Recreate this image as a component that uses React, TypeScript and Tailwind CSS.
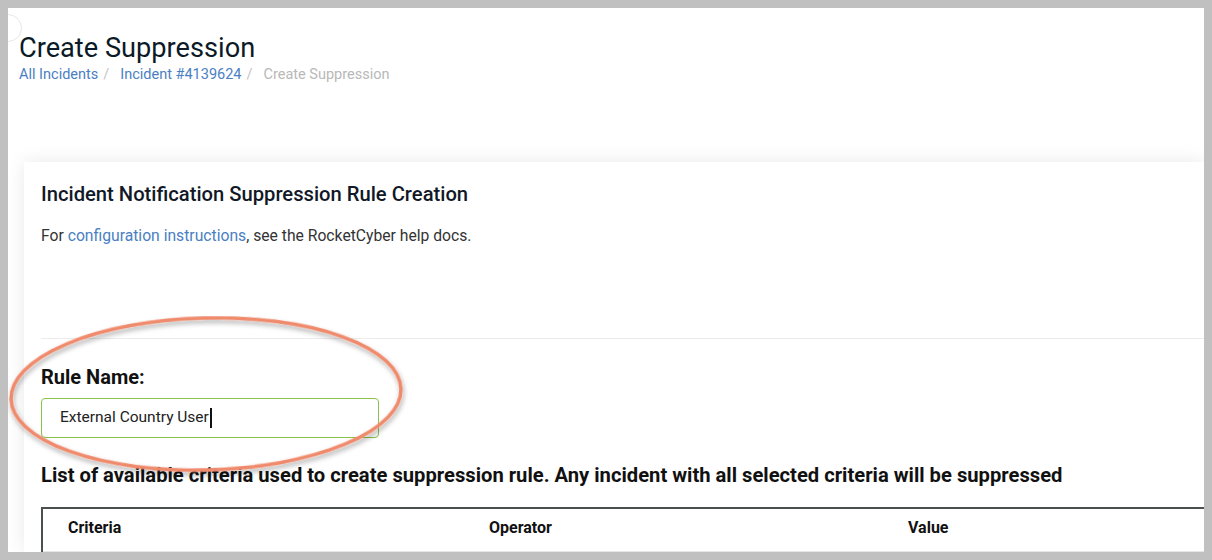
import React from "react";

const Breadcrumb = () => (
  <div className="flex items-center text-[14.5px] leading-[22px]">
    <a className="text-[#4a80c2]">All Incidents</a>
    <span className="pl-[5px] pr-[11px] text-[#c4c4c4]">/</span>
    <a className="text-[#4a80c2]">Incident #4139624</a>
    <span className="pl-[5px] pr-[11px] text-[#c4c4c4]">/</span>
    <span className="text-[#b8b8b8]">Create Suppression</span>
  </div>
);

const HighlightEllipse = () => (
  <svg
    className="pointer-events-none absolute left-0 top-[308px]"
    width="420"
    height="180"
    viewBox="0 0 420 180"
  >
    <defs>
      <filter id="sh" x="-10%" y="-10%" width="120%" height="130%">
        <feDropShadow dx="1" dy="3" stdDeviation="2.5" floodColor="#000" floodOpacity="0.35" />
      </filter>
    </defs>
    <ellipse
      cx="198"
      cy="78"
      rx="195"
      ry="76"
      transform="rotate(-1.5 198 78)"
      fill="none"
      stroke="#f08a6c"
      strokeWidth="3.5"
      filter="url(#sh)"
    />
  </svg>
);

export default function App() {
  return (
    <div className="h-[560px] w-[1212px] bg-[#c0c0c0] p-[8px] font-['Roboto',sans-serif]">
      <div className="relative flex h-[544px] w-[1196px] flex-col overflow-hidden bg-white">
        <div className="absolute left-[-14px] top-[6px] h-[28px] w-[28px] rounded-full border border-[#e6e6e6] bg-white" />
        <div className="pl-[11px] pt-[24px]">
          <h1 className="text-[27.2px] leading-[32px] font-normal text-[#0b1a26]">Create Suppression</h1>
          <Breadcrumb />
        </div>
        <div className="ml-[16px] mt-[76px] flex-1 bg-white pl-[17px] pt-[19px] shadow-[0_0_18px_rgba(0,0,0,0.09)]">
          <h2 className="text-[20.2px] leading-[26px] font-medium text-[#111827]">
            Incident Notification Suppression Rule Creation
          </h2>
          <p className="mt-[18px] text-[15.7px] leading-[22px] text-[#333]">
            For <a className="text-[#4a80c2]">configuration instructions</a>, see the RocketCyber help docs.
          </p>
          <div className="mt-[91px] border-t border-[#ececec]" />
          <div className="mt-[25px] text-[20px] leading-[26px] font-bold text-[#111]">Rule Name:</div>
          <div className="mt-[8px] flex h-[40px] w-[338px] items-center rounded-[4px] border border-[#8bc34a] pl-[18px] text-[15.5px] text-[#222]">
            <span>External Country User</span>
            <span className="ml-[1px] h-[20px] w-[2px] bg-[#111]" />
          </div>
          <div className="mt-[24px] whitespace-nowrap text-[20.2px] leading-[26px] font-bold text-[#111]">
            List of available criteria used to create suppression rule. Any incident with all selected criteria will be suppressed
          </div>
          <div className="mt-[19px] border-l-2 border-t-2 border-[#4a4f4f]">
            <div className="grid grid-cols-[421px_419px_1fr] border-b border-[#e6e6e6] pb-[12px] pl-[25px] pt-[8px] text-[16px] leading-[22px] font-bold text-[#111]">
              <span>Criteria</span>
              <span>Operator</span>
              <span>Value</span>
            </div>
          </div>
        </div>
        <HighlightEllipse />
      </div>
    </div>
  );
}
